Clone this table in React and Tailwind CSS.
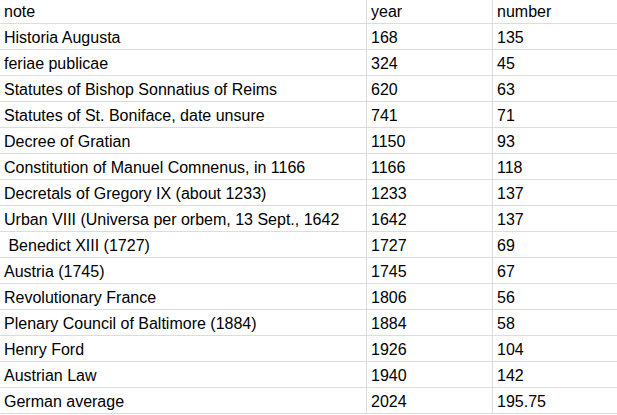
import React from 'react';

const rows = [
  ['note', 'year', 'number'],
  ['Historia Augusta', '168', '135'],
  ['feriae publicae', '324', '45'],
  ['Statutes of Bishop Sonnatius of Reims', '620', '63'],
  ['Statutes of St. Boniface, date unsure', '741', '71'],
  ['Decree of Gratian', '1150', '93'],
  ['Constitution of Manuel Comnenus, in 1166', '1166', '118'],
  ['Decretals of Gregory IX (about 1233)', '1233', '137'],
  ['Urban VIII (Universa per orbem, 13 Sept., 1642', '1642', '137'],
  ['\u00a0Benedict XIII (1727)', '1727', '69'],
  ['Austria (1745)', '1745', '67'],
  ['Revolutionary France', '1806', '56'],
  ['Plenary Council of Baltimore (1884)', '1884', '58'],
  ['Henry Ford', '1926', '104'],
  ['Austrian Law', '1940', '142'],
  ['German average', '2024', '195.75'],
];

export default function App() {
  return (
    <div className="w-[617px] h-[415px] overflow-hidden bg-white text-black text-[16px] font-['Liberation_Sans',Arial,sans-serif]">
      <div className="grid grid-cols-[367px_126px_1fr]">
        {rows.map((r, i) => (
          <React.Fragment key={i}>
            {r.map((c, j) => (
              <div
                key={j}
                className={`${i === 0 ? 'h-[24px] pt-[3px]' : 'h-[26px] pt-[5px]'} border-b border-[#dcdcdc] ${j < 2 ? 'border-r' : ''} pl-[4px] leading-[18px] whitespace-nowrap overflow-hidden`}
              >
                {c}
              </div>
            ))}
          </React.Fragment>
        ))}
      </div>
    </div>
  );
}
